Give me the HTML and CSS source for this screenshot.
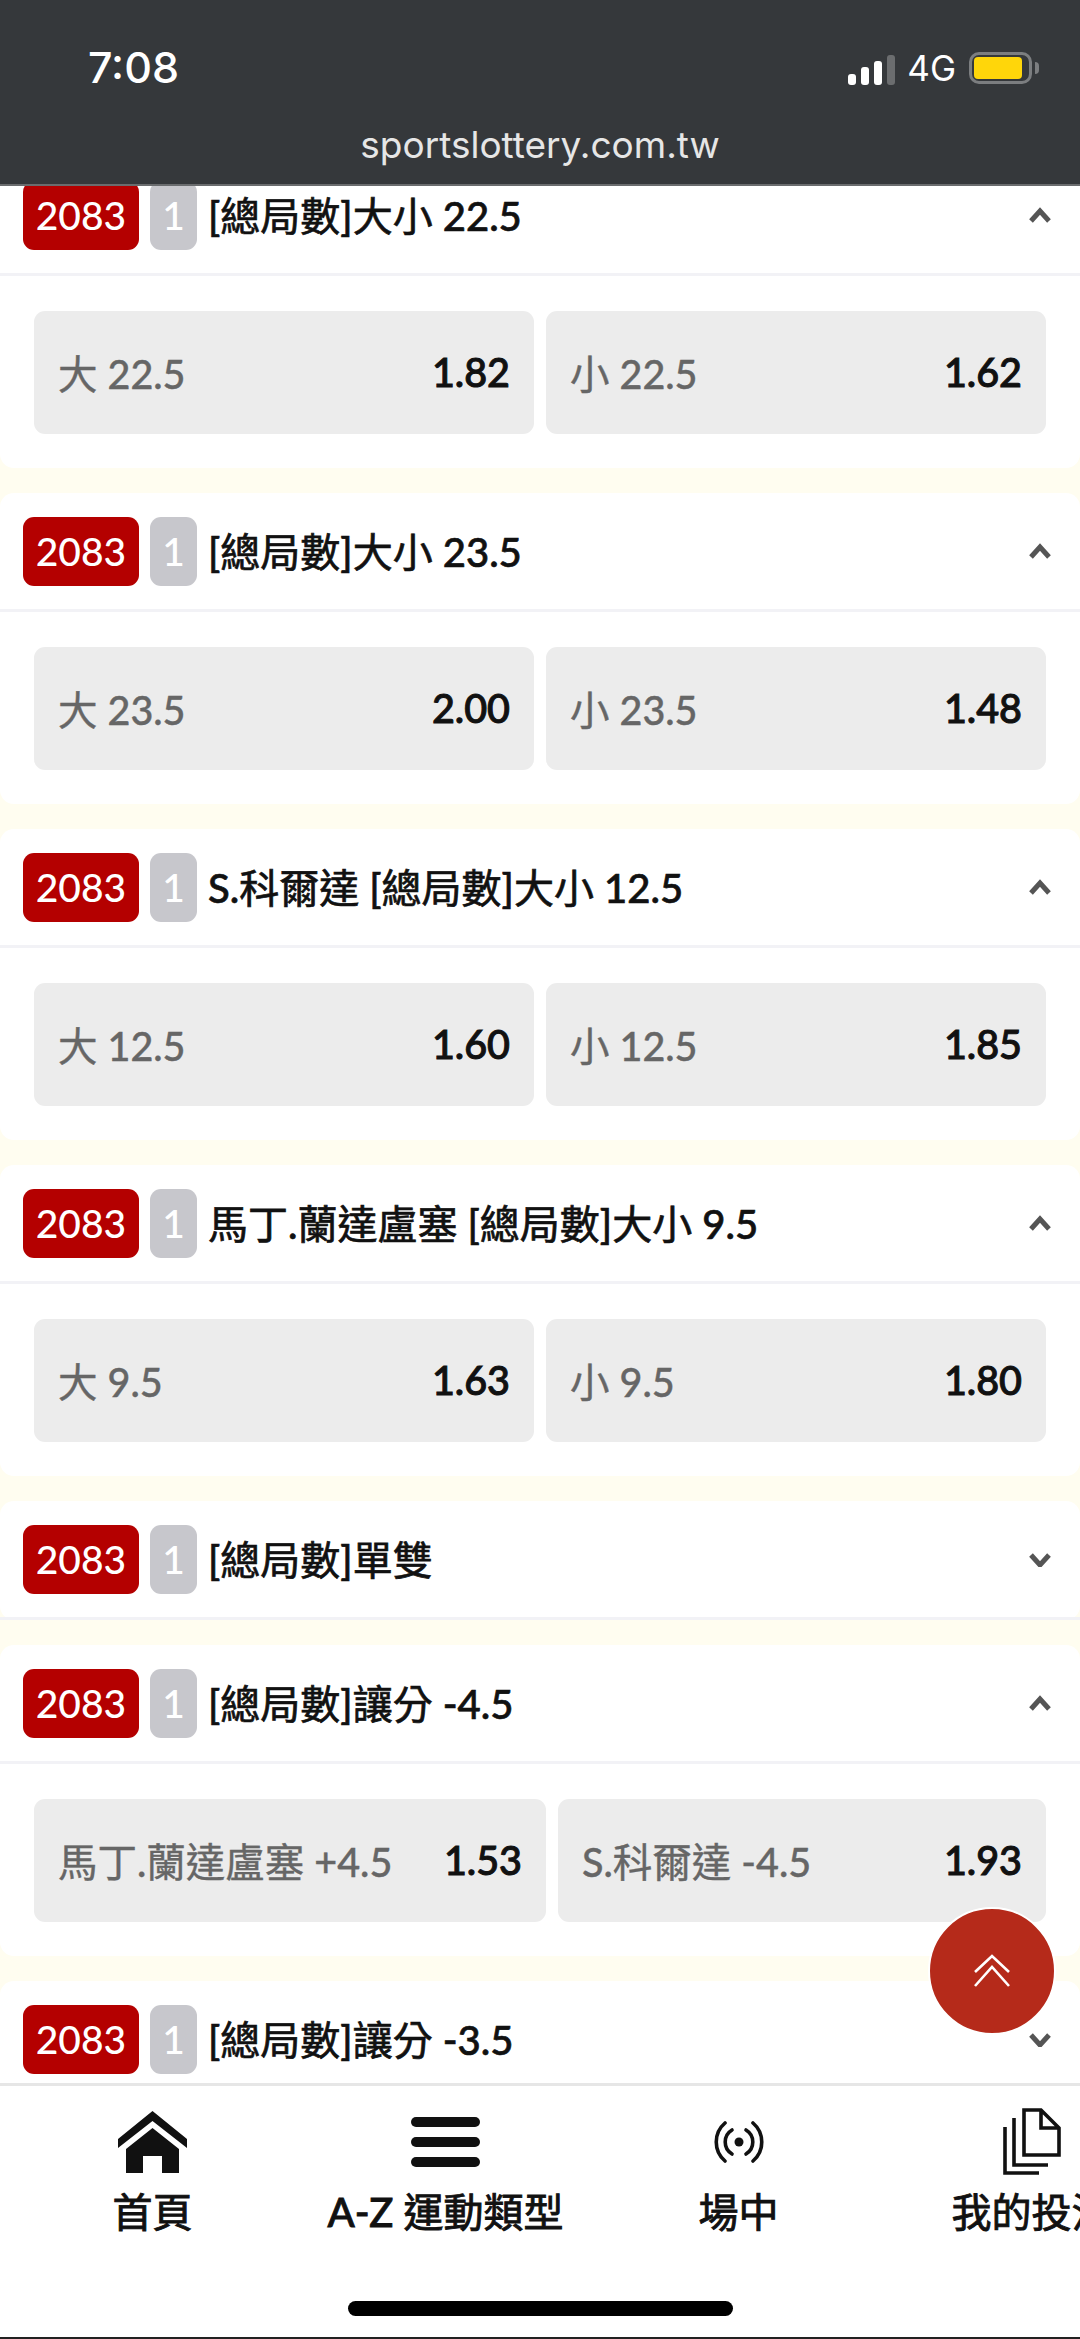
FILE: index.html
```html
<!DOCTYPE html>
<html lang="zh-Hant">

<head>
    <meta charset="UTF-8">
    <meta name="viewport" content="width=device-width, initial-scale=1.0">
    <title>sportslottery.com.tw</title>
    <link rel="stylesheet" href="styles.css">
</head>

<body>
    <svg class="sprites" width="0" height="0">
        <symbol id="chev-up" viewBox="0 0 24 16">
            <path d="M3 14 L12 4 L21 14" fill="none" stroke="currentColor" stroke-width="5" />
        </symbol>
        <symbol id="chev-down" viewBox="0 0 24 16">
            <path d="M3 4 L12 14 L21 4" fill="none" stroke="currentColor" stroke-width="5" />
        </symbol>
    </svg>

    <div class="app">
        <header class="topbar">
            <div class="status">
                <span class="clock">7:08</span>
                <div class="status-right">
                    <div class="signal">
                        <i class="bar bar-1"></i>
                        <i class="bar bar-2"></i>
                        <i class="bar bar-3"></i>
                        <i class="bar bar-4"></i>
                    </div>
                    <span class="net">4G</span>
                    <div class="battery"><i class="battery-fill"></i></div>
                    <i class="battery-nib"></i>
                </div>
            </div>
            <div class="url">sportslottery.com.tw</div>
        </header>

        <main class="list">
            <section class="card">
                <div class="card-head">
                    <span class="code">2083</span><span class="num">1</span>
                    <h2 class="title">[總局數]大小 22.5</h2>
                    <svg class="chev"><use href="#chev-up" /></svg>
                </div>
                <div class="odds">
                    <div class="odd"><span class="odd-name">大 22.5</span><b class="odd-val">1.82</b></div>
                    <div class="odd"><span class="odd-name">小 22.5</span><b class="odd-val">1.62</b></div>
                </div>
            </section>

            <section class="card">
                <div class="card-head">
                    <span class="code">2083</span><span class="num">1</span>
                    <h2 class="title">[總局數]大小 23.5</h2>
                    <svg class="chev"><use href="#chev-up" /></svg>
                </div>
                <div class="odds">
                    <div class="odd"><span class="odd-name">大 23.5</span><b class="odd-val">2.00</b></div>
                    <div class="odd"><span class="odd-name">小 23.5</span><b class="odd-val">1.48</b></div>
                </div>
            </section>

            <section class="card">
                <div class="card-head">
                    <span class="code">2083</span><span class="num">1</span>
                    <h2 class="title">S.科爾達 [總局數]大小 12.5</h2>
                    <svg class="chev"><use href="#chev-up" /></svg>
                </div>
                <div class="odds">
                    <div class="odd"><span class="odd-name">大 12.5</span><b class="odd-val">1.60</b></div>
                    <div class="odd"><span class="odd-name">小 12.5</span><b class="odd-val">1.85</b></div>
                </div>
            </section>

            <section class="card">
                <div class="card-head">
                    <span class="code">2083</span><span class="num">1</span>
                    <h2 class="title">馬丁.蘭達盧塞 [總局數]大小 9.5</h2>
                    <svg class="chev"><use href="#chev-up" /></svg>
                </div>
                <div class="odds">
                    <div class="odd"><span class="odd-name">大 9.5</span><b class="odd-val">1.63</b></div>
                    <div class="odd"><span class="odd-name">小 9.5</span><b class="odd-val">1.80</b></div>
                </div>
            </section>

            <section class="card">
                <div class="card-head">
                    <span class="code">2083</span><span class="num">1</span>
                    <h2 class="title">[總局數]單雙</h2>
                    <svg class="chev"><use href="#chev-down" /></svg>
                </div>
            </section>

            <section class="card">
                <div class="card-head">
                    <span class="code">2083</span><span class="num">1</span>
                    <h2 class="title">[總局數]讓分 -4.5</h2>
                    <svg class="chev"><use href="#chev-up" /></svg>
                </div>
                <div class="odds odds-wide">
                    <div class="odd"><span class="odd-name">馬丁.蘭達盧塞 +4.5</span><b class="odd-val">1.53</b></div>
                    <div class="odd"><span class="odd-name">S.科爾達 -4.5</span><b class="odd-val">1.93</b></div>
                </div>
            </section>

            <section class="card">
                <div class="card-head">
                    <span class="code">2083</span><span class="num">1</span>
                    <h2 class="title">[總局數]讓分 -3.5</h2>
                    <svg class="chev"><use href="#chev-down" /></svg>
                </div>
            </section>
        </main>

        <button class="to-top" aria-label="top">
            <svg width="56" height="34" viewBox="0 0 56 34">
                <path d="M11 18 L28 2 L45 18 M11 32 L28 13 L45 32" fill="none" stroke="#fff" stroke-width="2.6" />
            </svg>
        </button>

        <nav class="tabbar">
            <div class="tabs">
                <a class="tab">
                    <span class="tab-icon">
                        <svg width="69" height="62" viewBox="0 0 69 62">
                            <path d="M34.5 0 L69 28 V37 L34.5 10 L0 37 V28 Z" fill="#111" />
                            <path d="M34.5 17 L61 38 V62 H44 V45 H25 V62 H8 V38 Z" fill="#111" />
                        </svg>
                    </span>
                    首頁
                </a>
                <a class="tab">
                    <span class="tab-icon">
                        <svg width="69" height="50" viewBox="0 0 69 50">
                            <rect x="0" y="0" width="69" height="10" rx="5" fill="#111" />
                            <rect x="0" y="20" width="69" height="10" rx="5" fill="#111" />
                            <rect x="0" y="40" width="69" height="10" rx="5" fill="#111" />
                        </svg>
                    </span>
                    A-Z 運動類型
                </a>
                <a class="tab">
                    <span class="tab-icon">
                        <svg width="52" height="42" viewBox="0 0 52 42" fill="none" stroke="#111" stroke-width="3.6" stroke-linecap="round">
                            <circle cx="26" cy="21" r="4.5" fill="#111" stroke="none" />
                            <path d="M19 9 A14 14 0 0 0 19 33 M33 9 A14 14 0 0 1 33 33" />
                            <path d="M12 2 A25 25 0 0 0 12 40 M40 2 A25 25 0 0 1 40 40" />
                        </svg>
                    </span>
                    場中
                </a>
                <a class="tab">
                    <span class="tab-icon">
                        <svg width="58" height="67" viewBox="0 0 58 67" fill="none" stroke="#111" stroke-width="3.6">
                            <path d="M21 2 H38 L56 20 V47 H21 Z M38 2 V20 H56" />
                            <path d="M11 10 V57 H45" />
                            <path d="M2 19 V65 H36" />
                        </svg>
                    </span>
                    我的投注
                </a>
            </div>
            <div class="home-bar"></div>
        </nav>
    </div>
</body>

</html>
```

FILE: styles.css
```css
* {
    box-sizing: border-box;
}

body {
    margin: 0;
    background-color: #fff;
    color: #111;
    font-family: "Lato Medium", Lato, "Noto Sans CJK TC", sans-serif;
}

.sprites {
    position: absolute;
}

.app {
    position: relative;
    display: flex;
    flex-direction: column;
    width: 1080px;
    height: 2339px;
    overflow: hidden;
}

/* top bar */
.topbar {
    position: relative;
    z-index: 2;
    flex: none;
    height: 186px;
    padding-top: 42px;
    background-color: #35383b;
    border-bottom: 2px solid #6a6c6e;
    color: #fff;
    font-family: Inter, sans-serif;
}

.status {
    display: flex;
    justify-content: space-between;
    align-items: center;
    height: 50px;
    padding: 0 41px 0 88px;
}

.clock {
    font-size: 43px;
    font-weight: 500;
}

.status-right {
    display: flex;
    align-items: center;
}

.signal {
    display: flex;
    align-items: flex-end;
    gap: 5px;
    height: 31px;
    margin-top: 4px;
}

.bar {
    display: block;
    width: 8px;
    background-color: #fff;
    border-radius: 3px;
}

.bar-1 {
    height: 11px;
}

.bar-2 {
    height: 18px;
}

.bar-3 {
    height: 24px;
}

.bar-4 {
    height: 30px;
    background-color: #6b6d6f;
}

.net {
    margin: 2px 13px 0 12px;
    font-size: 35px;
}

.battery {
    width: 63px;
    height: 32px;
    margin-top: 2px;
    padding: 2px;
    border: 3px solid #7c7e80;
    border-radius: 10px;
}

.battery-fill {
    display: block;
    width: 48px;
    height: 22px;
    background-color: #ffd60a;
    border-radius: 4px;
}

.battery-nib {
    display: block;
    width: 4px;
    height: 12px;
    margin: 2px 0 0 3px;
    background-color: #7c7e80;
    border-radius: 0 4px 4px 0;
}

.url {
    margin-top: 30px;
    font-size: 37px;
    text-align: center;
    color: #e6e6e6;
}

/* market list */
.list {
    flex: 1;
    min-height: 0;
    overflow: hidden;
    background-color: #fffdf0;
}

.card {
    margin-bottom: 25px;
    background-color: #fff;
    border-radius: 14px;
}

.card:first-child {
    margin-top: -29px;
}

.card-head {
    display: flex;
    align-items: center;
    height: 119px;
    padding: 0 22px 0 23px;
    border-bottom: 3px solid #f2f2f6;
}

.code,
.num {
    display: flex;
    justify-content: center;
    align-items: center;
    height: 69px;
    border-radius: 11px;
    font-size: 39px;
    color: #fff;
}

.code {
    width: 116px;
    background-color: #b40000;
}

.num {
    width: 47px;
    margin-left: 11px;
    background-color: #c7c7cc;
}

.title {
    flex: 1;
    margin: -2px 0 0 11px;
    font-size: 40px;
    font-weight: 400;
    -webkit-text-stroke: 0.7px #111;
    color: #111;
}

.chev {
    flex: none;
    width: 24px;
    height: 16px;
    margin-right: 6px;
    color: #555;
}

.odds {
    display: grid;
    grid-template-columns: 1fr 1fr;
    gap: 12px;
    padding: 35px 34px 34px;
}

.odds-wide {
    grid-template-columns: 512fr 488fr;
}

.odd {
    display: flex;
    justify-content: space-between;
    align-items: center;
    height: 123px;
    padding: 0 24px 2px;
    background-color: #ececec;
    border-radius: 11px;
    font-size: 39.5px;
}

.odd-name {
    -webkit-text-stroke: 0.4px #666;
    color: #666;
}

.odd-val {
    font-weight: 400;
    -webkit-text-stroke: 1px #111;
    color: #111;
}

/* scroll to top */
.to-top {
    position: absolute;
    z-index: 3;
    right: 24px;
    bottom: 304px;
    display: flex;
    justify-content: center;
    align-items: center;
    width: 128px;
    height: 128px;
    padding: 0;
    background-color: #b52a1a;
    border: 2px solid #fff;
    border-radius: 50%;
}

/* bottom tabs */
.tabbar {
    position: relative;
    z-index: 2;
    flex: none;
    height: 256px;
    background-color: #fff;
    border-top: 3px solid #e6e6e6;
    border-bottom: 2px solid #222;
}

.tabs {
    display: flex;
    padding-left: 6px;
}

.tab {
    flex: none;
    display: flex;
    flex-direction: column;
    align-items: center;
    width: 293px;
    font-size: 40px;
    font-weight: 400;
    -webkit-text-stroke: 0.9px #111;
    white-space: nowrap;
    color: #111;
}

.tab-icon {
    display: flex;
    justify-content: center;
    align-items: center;
    height: 67px;
    margin: 22px 0 6px;
}

.home-bar {
    position: absolute;
    left: 348px;
    bottom: 21px;
    width: 385px;
    height: 15px;
    background-color: #000;
    border-radius: 8px;
}
```
